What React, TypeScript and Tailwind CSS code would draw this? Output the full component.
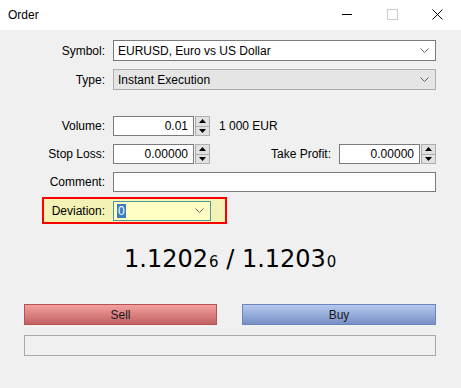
import React from 'react';

const font = { fontFamily: '"Liberation Sans", Arial, sans-serif' };

function Chevron() {
  return (
    <svg width="9" height="5" viewBox="0 0 9 5" className="shrink-0">
      <path d="M0.5 0.5 L4.5 4.5 L8.5 0.5" fill="none" stroke="#606060" strokeWidth="1" />
    </svg>
  );
}

function Spinner() {
  return (
    <div className="ml-px flex h-[20px] w-[15px] flex-col border border-[#adadad] bg-[#e1e1e1]">
      <div className="flex flex-1 items-center justify-center border-b border-[#adadad]">
        <svg width="7" height="4" viewBox="0 0 7 4">
          <path d="M3.5 0 L7 4 L0 4 Z" fill="#000" />
        </svg>
      </div>
      <div className="flex flex-1 items-center justify-center">
        <svg width="7" height="4" viewBox="0 0 7 4">
          <path d="M0 0 L7 0 L3.5 4 Z" fill="#000" />
        </svg>
      </div>
    </div>
  );
}

function NumberBox({ value }: { value: string }) {
  return (
    <div className="flex h-[20px] w-[81px] items-center justify-end border border-[#7a7a7a] bg-white pr-[5px] text-[12px] text-[#000]">
      {value}
    </div>
  );
}

function Label({ children }: { children: React.ReactNode }) {
  return <div className="w-[105px] shrink-0 text-right text-[12px] text-[#000]">{children}</div>;
}

export default function App() {
  return (
    <div className="h-[388px] w-[461px] overflow-hidden bg-[#f0f0f0]" style={font}>
      {/* Title bar */}
      <div className="flex h-[30px] items-center bg-white">
        <span className="ml-[8px] text-[12px] text-[#000]">Order</span>
        <div className="ml-auto flex items-center">
          <svg width="46" height="30" viewBox="0 0 46 30">
            <path d="M19 14.5 H29" stroke="#000" strokeWidth="1" />
          </svg>
          <svg width="46" height="30" viewBox="0 0 46 30">
            <rect x="18.5" y="9.5" width="10" height="10" fill="none" stroke="#cccccc" strokeWidth="1" />
          </svg>
          <svg width="46" height="30" viewBox="0 0 46 30">
            <path d="M17.5 9.5 L27.5 19.5 M27.5 9.5 L17.5 19.5" stroke="#000" strokeWidth="1" />
          </svg>
        </div>
      </div>

      {/* Form */}
      <div className="flex flex-col pr-[25px] pt-[10px]">
        <div className="flex items-center gap-2">
          <Label>Symbol:</Label>
          <div className="flex h-[21px] flex-1 items-center justify-between border border-[#7a7a7a] bg-white pl-[4px] pr-[6px] text-[12px] text-[#000]">
            <span>EURUSD, Euro vs US Dollar</span>
            <Chevron />
          </div>
        </div>

        <div className="mt-[8px] flex items-center gap-2">
          <Label>Type:</Label>
          <div className="flex h-[21px] flex-1 items-center justify-between border border-[#adadad] bg-[#e5e5e5] pl-[4px] pr-[6px] text-[12px] text-[#000]">
            <span>Instant Execution</span>
            <Chevron />
          </div>
        </div>

        <div className="mt-[26px] flex items-center gap-2">
          <Label>Volume:</Label>
          <div className="flex items-center">
            <NumberBox value="0.01" />
            <Spinner />
            <span className="ml-[9px] text-[12px] text-[#000]">1 000 EUR</span>
          </div>
        </div>

        <div className="mt-[8px] flex items-center gap-2">
          <Label>Stop Loss:</Label>
          <div className="flex flex-1 items-center">
            <NumberBox value="0.00000" />
            <Spinner />
            <span className="ml-auto mr-[8px] text-[12px] text-[#000]">Take Profit:</span>
            <NumberBox value="0.00000" />
            <Spinner />
          </div>
        </div>

        <div className="mt-[8px] flex items-center gap-2">
          <Label>Comment:</Label>
          <div className="h-[20px] flex-1 border border-[#7a7a7a] bg-white" />
        </div>

        <div className="ml-[42px] mt-[5px] flex h-[27px] w-[185px] items-center gap-2 border-2 border-[#ff0000] bg-[#f4f2b4] pr-[14px]">
          <div className="w-[61px] shrink-0 text-right text-[12px] text-[#000]">Deviation:</div>
          <div className="flex h-[20px] w-[98px] items-center justify-between border border-[#4a9aa0] bg-[#ffffc4] pl-[3px] pr-[6px] text-[12px]">
            <span className="bg-[#3a7ec0] px-px leading-[14px] text-white">0</span>
            <Chevron />
          </div>
        </div>
      </div>

      {/* Price */}
      <div className="mt-[17px] flex h-[34px] items-baseline pl-[124px] text-[#000]" style={{ fontFamily: '"DejaVu Sans", Verdana, sans-serif' }}>
        <span className="text-[24px]">1.1202</span>
        <span className="ml-px text-[15px]">6</span>
        <span className="text-[24px]">&nbsp;/&nbsp;</span>
        <span className="text-[24px]">1.1203</span>
        <span className="ml-px text-[15px]">0</span>
      </div>

      {/* Buttons */}
      <div className="mt-[29px] flex gap-[25px] pl-[24px] pr-[25px]">
        <div className="flex h-[21px] w-[193px] items-center justify-center border border-[#b85252] bg-gradient-to-b from-[#f2a0a0] to-[#c26262] text-[12px] text-[#1a1a1a]">
          Sell
        </div>
        <div className="flex h-[21px] flex-1 items-center justify-center border border-[#6b86bf] bg-gradient-to-b from-[#b6c9ee] to-[#7890c6] text-[12px] text-[#1a1a1a]">
          Buy
        </div>
      </div>

      <div className="ml-[24px] mr-[25px] mt-[10px] h-[21px] border border-[#a8a8a8]" />
    </div>
  );
}
